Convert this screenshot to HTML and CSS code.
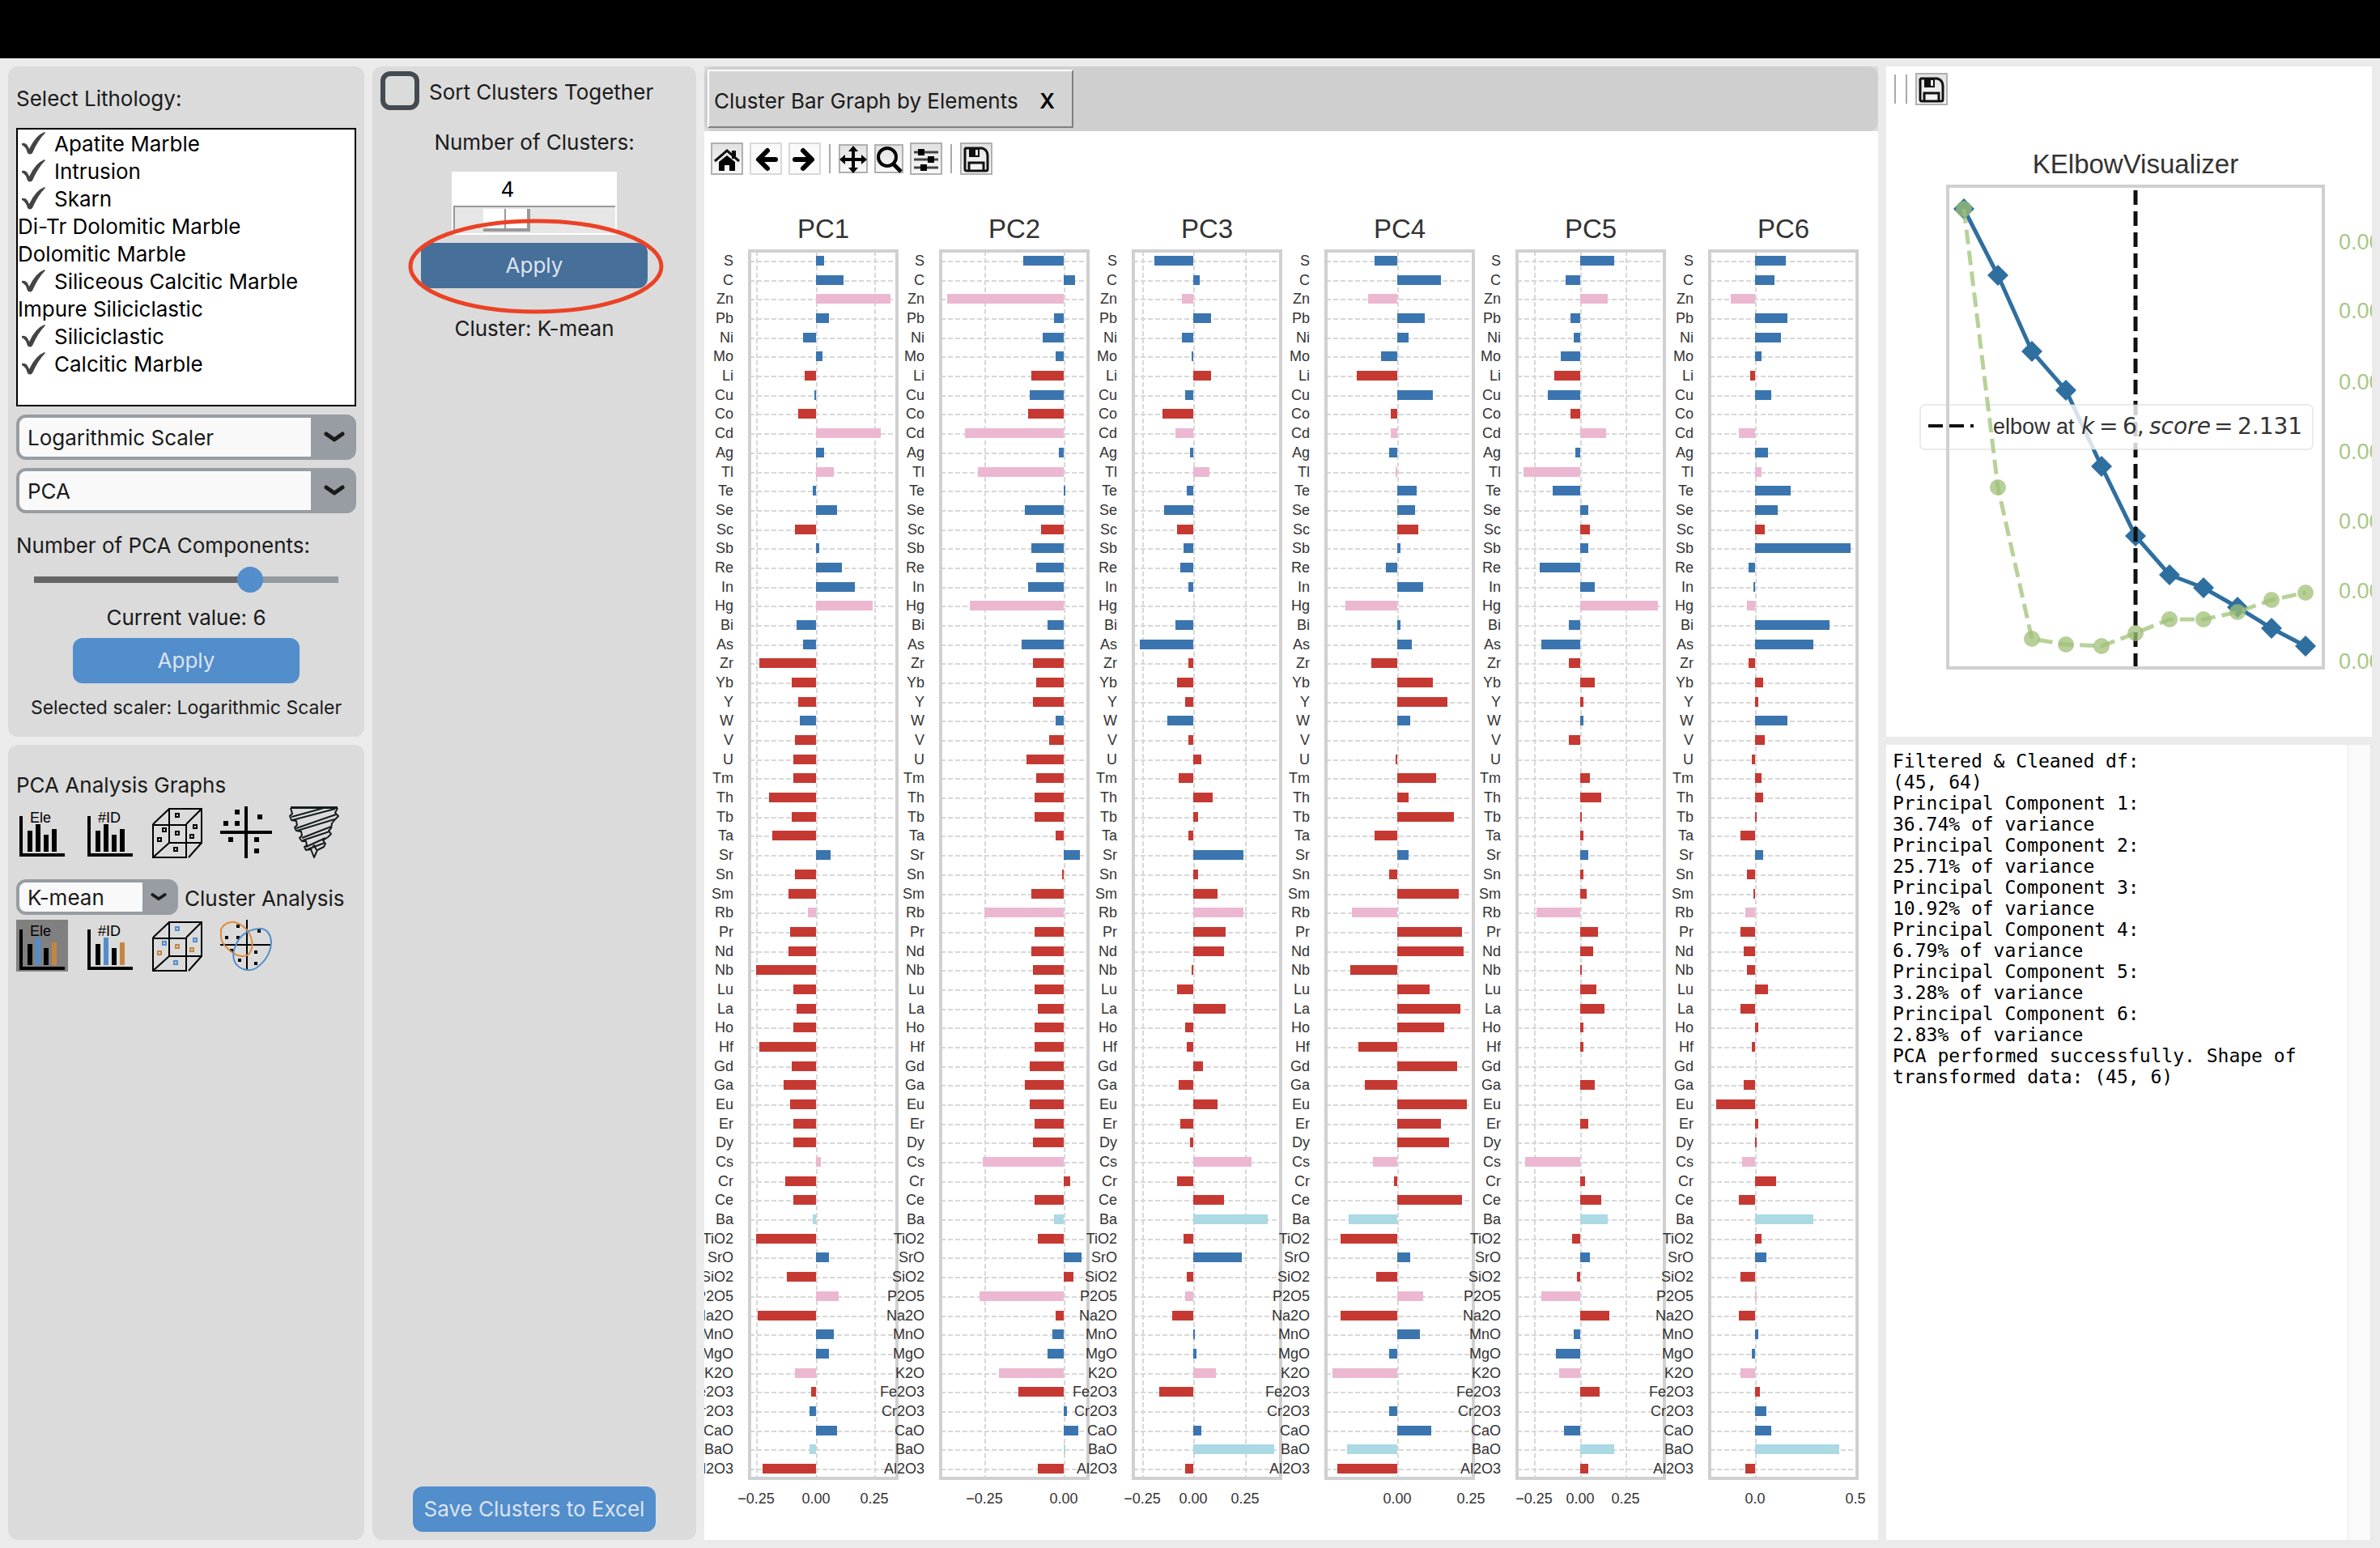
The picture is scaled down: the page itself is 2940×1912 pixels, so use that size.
FILE: index.html
```html
<!DOCTYPE html>
<html lang="en">
<head>
<meta charset="utf-8">
<title>Lithology Cluster Analysis</title>
<meta name="viewport" content="width=device-width, initial-scale=1">
<link rel="stylesheet" href="styles.css">
</head>
<body>
<svg class="defs" aria-hidden="true">
  <symbol id="i-bars" viewBox="0 0 64 64">
    <path d="M6 12V60H60" fill="none" stroke="#000" stroke-width="4"/>
    <path d="M17 56V30M37 56V35" stroke="#000" stroke-width="6"/>
    <path class="tone-a" d="M27 56V22" stroke-width="6"/>
    <path class="tone-b" d="M47 56V28" stroke-width="6"/>
  </symbol>
  <symbol id="i-cube" viewBox="0 0 64 64">
    <path d="M1 23H42V63H1ZM21 3H61V45H21ZM1 22 21 3M42 22 61 3M1 63 21 45M45 63 61 45" fill="none" stroke="#000" stroke-width="2"/>
    <path class="line-a" d="M29 9h4v4h-4zM13 27h4v4h-4zM51 23h4v4h-4zM27 51h4v4h-4z" fill="none" stroke-width="2"/>
    <path class="line-b" d="M29 31h4v4h-4zM7 39h4v4h-4zM47 35h4v4h-4z" fill="none" stroke-width="2"/>
  </symbol>
  <symbol id="i-save" viewBox="0 0 36 36">
    <path d="M5 5H25Q32 7 32 14V31Q32 33 30 33H6Q4 33 4 31V6Z" fill="none" stroke="#111" stroke-width="3"/>
    <path d="M9 5H22V16H9Z" fill="#111"/><path d="M17 7H20V14H17Z" fill="#eee"/>
    <path d="M9 33V23H27V33" fill="none" stroke="#111" stroke-width="3"/>
  </symbol>
</svg>

<div class="menubar"></div>
<main class="app">
  <div class="side">
    <section class="panel setup">
      <label class="caption first" for="lith">Select Lithology:</label>
      <select class="lithology" id="lith" multiple size="9">
        <option class="on">Apatite Marble</option>
        <option class="on">Intrusion</option>
        <option class="on">Skarn</option>
        <option>Di-Tr Dolomitic Marble</option>
        <option>Dolomitic Marble</option>
        <option class="on">Siliceous Calcitic Marble</option>
        <option>Impure Siliciclastic</option>
        <option class="on">Siliciclastic</option>
        <option class="on">Calcitic Marble</option>
      </select>
      <select class="combo" aria-label="Scaler"><option>Logarithmic Scaler</option></select>
      <select class="combo" aria-label="Method"><option>PCA</option></select>
      <label class="caption components" for="ncomp">Number of PCA Components:</label>
      <input class="slider" id="ncomp" type="range" min="0" max="100" value="73">
      <p class="caption current">Current value: 6</p>
      <button class="btn apply" type="button">Apply</button>
      <p class="caption selected">Selected scaler: Logarithmic Scaler</p>
    </section>
    <section class="panel graphs">
      <h2 class="caption">PCA Analysis Graphs</h2>
      <div class="icons">
        <button class="icon" type="button" aria-label="PCA by element"><svg viewBox="0 0 64 64"><use href="#i-bars"/><text x="17" y="20">Ele</text></svg></button>
        <button class="icon" type="button" aria-label="PCA by ID"><svg viewBox="0 0 64 64"><use href="#i-bars"/><text x="17" y="20">#ID</text></svg></button>
        <button class="icon" type="button" aria-label="PCA 3D"><svg viewBox="0 0 64 64"><use href="#i-cube"/></svg></button>
        <button class="icon" type="button" aria-label="PCA scatter"><svg viewBox="0 0 64 64"><path d="M32 0V64M0 32H64" stroke="#000" stroke-width="4"/><path d="M18 4h6v6h-6zM46 10h6v6h-6zM4 18h6v6h-6zM18 18h6v6h-6zM10 38h6v6h-6zM42 38h6v6h-6zM42 52h6v6h-6z"/></svg></button>
        <button class="icon" type="button" aria-label="Scree plot"><svg viewBox="0 0 64 64" fill="none" stroke="#141c1c" stroke-width="2" stroke-linejoin="round">
          <path d="M3 1H61" stroke-width="4"/>
          <path d="M3 2 5 9 2 12 4 17 10 18 11 23 8 26 10 30 16 31 17 36 14 39 17 43 22 43 23 48 20 50 22 54 28 53 32 63 36 54 44 50 46 46 43 42 49 38 53 34 50 30 53 27 54 21 58 16 62 12 58 8 61 2"/>
          <path d="M4 13 44 2M5 17 58 3M10 27 59 10M11 30 57 16M17 39 53 25M18 42 51 31M22 50 46 39M24 53 45 45M28 53 32 48 35 54"/></svg></button>
      </div>
      <div class="method">
        <select class="combo small" id="cluster"><option>K-mean</option></select>
        <label class="caption" for="cluster">Cluster Analysis</label>
      </div>
      <div class="icons colored">
        <button class="icon active" type="button" aria-label="Clusters by element"><svg viewBox="0 0 64 64"><use href="#i-bars"/><text x="17" y="20">Ele</text></svg></button>
        <button class="icon" type="button" aria-label="Clusters by ID"><svg viewBox="0 0 64 64"><use href="#i-bars"/><text x="17" y="20">#ID</text></svg></button>
        <button class="icon" type="button" aria-label="Clusters 3D"><svg viewBox="0 0 64 64"><use href="#i-cube"/></svg></button>
        <button class="icon" type="button" aria-label="Cluster scatter"><svg viewBox="0 0 64 64"><path d="M33 0V62M0 31H63" stroke="#000" stroke-width="2"/><path d="M20 6h4v4h-4zM46 12h4v4h-4zM6 20h4v4h-4zM20 20h4v4h-4zM12 36h4v4h-4zM22 48h4v4h-4zM42 38h4v4h-4zM42 52h4v4h-4z"/>
          <path d="M1 12C4 5 12 2 18 3 26 5 33 11 36 17 40 24 41 33 37 40 34 46 26 46 19 43 11 38 2 30 1 22Z" fill="none" stroke="#e08b3c" stroke-width="2"/>
          <path d="M48 11C57 10 63 18 63 29 62 42 54 53 44 60 35 65 24 61 19 54 14 46 16 38 20 30 24 20 34 12 48 11Z" fill="none" stroke="#528dcc" stroke-width="2"/></svg></button>
      </div>
    </section>
  </div>

  <section class="panel clusters">
    <label class="sort"><input type="checkbox"><span>Sort Clusters Together</span></label>
    <label class="caption count" for="ncl">Number of Clusters:</label>
    <div class="scale">
      <output for="ncl">4</output>
      <input id="ncl" type="range" min="2" max="10" value="4">
    </div>
    <div class="marked">
      <button class="btn pressed" type="button">Apply</button>
      <svg class="ring" viewBox="0 0 316 118" aria-hidden="true"><ellipse cx="158" cy="59" rx="155" ry="56"/></svg>
    </div>
    <p class="caption kind">Cluster: K-mean</p>
    <button class="btn save" type="button">Save Clusters to Excel</button>
  </section>

  <section class="figure">
    <div class="tabstrip"><div class="tabs">
      <div class="tab"><span>Cluster Bar Graph by Elements</span><button type="button">X</button></div>
    </div></div>
    <div class="tools">
      <button class="tool" type="button" aria-label="Home"><svg viewBox="0 0 36 36"><path d="M24 8h5v10h-5z"/><path d="M3 21 18 8 33 21" fill="none" stroke="#111" stroke-width="3"/><path d="M8 22 18 14 28 22V33H21V26H15V33H8Z"/></svg></button>
      <button class="tool dim" type="button" aria-label="Back"><svg viewBox="0 0 36 36"><path d="M20 8 9 19 20 30M10 19H30" fill="none" stroke="#000" stroke-width="6" stroke-linecap="round" stroke-linejoin="round"/></svg></button>
      <button class="tool dim" type="button" aria-label="Forward"><svg viewBox="0 0 36 36"><path d="M16 8 27 19 16 30M26 19H6" fill="none" stroke="#000" stroke-width="6" stroke-linecap="round" stroke-linejoin="round"/></svg></button>
      <span class="sep"></span>
      <button class="tool flat" type="button" aria-label="Pan"><svg viewBox="0 0 32 32"><path d="M16 4V29M3 17H29" stroke="#000" stroke-width="4"/><path d="M16 0 22 7H10ZM16 34 22 27H10ZM-1 17 6 11V23ZM33 17 26 11V23Z"/></svg></button>
      <button class="tool flat" type="button" aria-label="Zoom"><svg viewBox="0 0 32 32"><circle cx="14" cy="14" r="11" fill="none" stroke="#000" stroke-width="4"/><path d="M22 23 31 32" stroke="#000" stroke-width="5"/></svg></button>
      <button class="tool" type="button" aria-label="Configure subplots"><svg viewBox="0 0 36 36"><path d="M3 10H33M3 19H33M3 29H33" stroke="#444" stroke-width="3"/><path d="M8 6h8v8H8zM20 15h8v8h-8zM11 25h8v8h-8z"/></svg></button>
      <span class="sep"></span>
      <button class="tool" type="button" aria-label="Save figure"><svg><use href="#i-save"/></svg></button>
    </div>
    <svg class="chart" id="chart" viewBox="0 0 1450 1660" role="img" aria-label="Principal component loadings by element"></svg>
  </section>

  <div class="results">
    <section class="elbow">
      <div class="tools mini">
        <span class="sep"></span><span class="sep"></span>
        <button class="tool" type="button" aria-label="Save plot"><svg><use href="#i-save"/></svg></button>
      </div>
      <svg class="plot" viewBox="0 56 600 760" role="img" aria-label="KElbowVisualizer">
        <text class="title" x="308" y="132">KElbowVisualizer</text>
        <path d="M96 176 138 258 180 352 222 400 266 494 308 580 350 628 392 644 434 668 476 694 518 716" fill="none" stroke="#2f6f9f" stroke-width="5"/>
        <g fill="#2f6f9f" id="diamonds"></g>
        <path d="M308 743V148" stroke="#111" stroke-width="5" stroke-dasharray="18 8"/>
        <rect x="42" y="418" width="485" height="55" rx="6" fill="#fff" fill-opacity=".8" stroke="#ccc" stroke-opacity=".4" stroke-width="2"/>
        <path d="M52 444H108" stroke="#111" stroke-width="4" stroke-dasharray="18 8"/>
        <g class="legend"><text x="132" y="454">elbow at</text>
          <g class="math"><text class="it" x="241" y="454">k</text><text x="263" y="454">=</text><text x="292" y="454">6,</text><text class="it" x="325" y="454">score</text><text x="405" y="454">=</text><text x="434" y="454">2.131</text></g></g>
        <rect x="76" y="148" width="464" height="595" fill="none" stroke="#d0d0d0" stroke-width="4"/>
        <path d="M96 176 138 520 180 707 222 714 266 716 308 700 350 683 392 683 434 674 476 659 518 650" fill="none" stroke="#9fc377" stroke-opacity=".75" stroke-width="5" stroke-dasharray="18 8"/>
        <g fill="#9fbf75" fill-opacity=".75" id="dots"></g>
        <g class="ticks"><text x="559" y="226">0.006</text><text x="559" y="311">0.006</text><text x="559" y="399">0.006</text><text x="559" y="485">0.006</text><text x="559" y="571">0.006</text><text x="559" y="657">0.006</text><text x="559" y="744">0.006</text></g>
      </svg>
    </section>
    <section class="log">
      <textarea readonly aria-label="Output log">Filtered &amp; Cleaned df:
(45, 64)
Principal Component 1:
36.74% of variance
Principal Component 2:
25.71% of variance
Principal Component 3:
10.92% of variance
Principal Component 4:
6.79% of variance
Principal Component 5:
3.28% of variance
Principal Component 6:
2.83% of variance
PCA performed successfully. Shape of transformed data: (45, 6)</textarea>
      <div class="rail"></div>
    </section>
  </div>
</main>
<script src="chart.js"></script>
</body>
</html>
```
FILE: styles.css
```css
* { box-sizing: border-box; }
body {
  margin: 0;
  min-height: 100vh;
  display: flex;
  flex-direction: column;
  background: #ebebeb;
  color: #1a1a1a;
  font: 26px/32px Inter, "Liberation Sans", sans-serif;
}
button, select, input, textarea { font: inherit; color: inherit; margin: 0; }
button { border: 0; padding: 0; background: none; }
p, h2 { margin: 0; font: inherit; }
.defs { display: none; }
.menubar { height: 72px; background: #000; }
.app {
  flex: 1;
  display: grid;
  grid-template-columns: 440px 400px minmax(0, 1fr) 600px;
  gap: 10px;
  padding: 10px;
}
.side, .results { display: flex; flex-direction: column; gap: 10px; }
.panel {
  display: flex;
  flex-direction: column;
  padding: 0 10px;
  border-radius: 12px;
  background: #dbdbdb;
}

/* setup panel */
.setup { padding-bottom: 20px; }
.first { margin: 24px 0 20px; }
.lithology {
  height: 344px;
  padding: 2px 0 0;
  border: 2px solid #000;
  border-radius: 0;
  background: #fff;
  color: #000;
  overflow: hidden;
  outline: 0;
}
.lithology option { height: 34px; min-height: 34px; line-height: 34px; padding: 0; }
.lithology .on {
  padding-left: 45px;
  background: url("data:image/svg+xml,%3Csvg xmlns='http://www.w3.org/2000/svg' width='30' height='30'%3E%3Cpath d='M1 15Q7 13 10 22Q18 5 29 1L30 2Q21 11 14 27Q11 30 8 27Q6 19 1 17Z' fill='%23444'/%3E%3C/svg%3E") 4px 0 no-repeat;
}
.combo {
  appearance: none;
  height: 56px;
  margin-top: 10px;
  padding: 2px 60px 0 10px;
  border: 4px solid #979da2;
  border-radius: 12px;
  background:
    url("data:image/svg+xml,%3Csvg xmlns='http://www.w3.org/2000/svg' width='26' height='16'%3E%3Cpath d='M3 4L13 11L23 4' fill='none' stroke='%231a1a1a' stroke-width='5' stroke-linecap='round' stroke-linejoin='round'/%3E%3C/svg%3E") right 10px center no-repeat,
    linear-gradient(#979da2, #979da2) right / 52px 100% no-repeat,
    #f9f9f9;
}
.components { margin-top: 24px; }
.slider {
  appearance: none;
  height: 32px;
  margin: 10px 22px 0;
  background: linear-gradient(90deg, #666 72%, #939ba2 72%) center / 100% 8px no-repeat;
}
.slider::-webkit-slider-thumb {
  appearance: none;
  width: 32px;
  height: 32px;
  border-radius: 50%;
  background: #528dcc;
}
.current { margin-top: 15px; text-align: center; }
.btn {
  width: 280px;
  height: 56px;
  border-radius: 12px;
  background: #528dcc;
  color: #dce4ee;
}
.apply { align-self: center; margin-top: 9px; }
.selected { margin-top: 14px; text-align: center; font-size: 23px; white-space: nowrap; }

/* graph pickers */
.graphs { flex: 1; padding-top: 34px; }
.icons { display: flex; gap: 20px; margin-top: 10px; }
.icon { width: 64px; height: 64px; }
.icon svg { display: block; width: 64px; height: 64px; }
.icon text { font: 18px "Liberation Sans", sans-serif; fill: #000; }
.icons { --a: #000; --b: #000; }
.colored { --a: #528dcc; --b: #c68642; margin-top: 6px; }
.tone-a, .line-a { stroke: var(--a); }
.tone-b, .line-b { stroke: var(--b); }
.active { background: #808080; }
.method { display: flex; align-items: center; gap: 8px; margin-top: 26px; white-space: nowrap; }
.method .caption { padding-top: 4px; }
.small {
  width: 200px;
  height: 44px;
  margin: 0;
  padding-right: 40px;
  background-size: 20px 12px, 40px 100%, auto;
}

/* cluster panel */
.clusters { align-items: center; padding: 6px 10px 10px; }
.sort { align-self: stretch; display: flex; align-items: center; gap: 12px; }
.sort span { padding-top: 4px; }
.sort input {
  appearance: none;
  width: 48px;
  height: 48px;
  border: 6px solid #434a50;
  border-radius: 12px;
}
.count { margin-top: 24px; }
.scale { width: 204px; height: 78px; margin-top: 20px; padding: 0 2px; background: #fff; }
.scale output {
  display: block;
  width: 134px;
  height: 42px;
  padding-top: 6px;
  color: #000;
  text-align: center;
}
.scale input {
  appearance: none;
  display: block;
  width: 100%;
  height: 34px;
  border: solid #999;
  border-width: 2px 0 0 2px;
  background: #e6e6e6;
}
.scale input::-webkit-slider-thumb {
  appearance: none;
  width: 58px;
  height: 28px;
  border: solid #999;
  border-width: 0 4px 4px 0;
  background: linear-gradient(90deg, #fff 26px, #999 26px, #999 28px, #fff 28px);
}
.marked { position: relative; margin-top: 10px; }
.marked .btn { display: block; }
.pressed { background: #466f9a; }
.ring { position: absolute; left: -16px; top: -30px; width: 316px; height: 118px; pointer-events: none; }
.ring ellipse { fill: none; stroke: #eb4226; stroke-width: 5; }
.kind { margin-top: 34px; }
.save { width: 300px; margin-top: auto; }

/* bar chart column */
.figure { background: #fff; overflow: hidden; }
.tabstrip { background: #dbdbdb; }
.tabs { height: 80px; padding: 4px; border-radius: 12px; background: #cfcfcf; }
.tab {
  display: inline-flex;
  align-items: center;
  gap: 26px;
  height: 72px;
  padding: 6px 20px 0 6px;
  border: 2px solid;
  border-color: #fff #808080 #808080 #fff;
  background: #d4d4d4;
}
.tab button { width: 20px; color: #000; font-weight: 600; }
.tools { display: flex; align-items: center; gap: 8px; padding: 14px 8px; }
.tool { width: 40px; height: 40px; border: 2px solid #b0b0b0; background: linear-gradient(#e2e2e2, #f8f8f8); }
.tool svg { display: block; width: 100%; height: 100%; overflow: visible; }
.dim { border-color: #d8d8d8; background: #fafafa; }
.flat { width: 36px; height: 36px; }
.sep { width: 2px; height: 36px; margin: 0 2px; background: #aaa; }
.mini { gap: 8px; padding: 8px; }
.chart, .plot { display: block; width: 100%; height: auto; }
.chart text, .plot text { font-family: "Liberation Sans", sans-serif; fill: #333; }
.chart .name { font-size: 18px; text-anchor: end; }
.chart .tick { font-size: 18px; text-anchor: middle; }
.title { font-size: 33px; text-anchor: middle; }
.grid { fill: none; stroke: #d8d8d8; stroke-width: 2; stroke-dasharray: 6 3; }
.frame { fill: none; stroke: #d0d0d0; stroke-width: 4; }

/* results column */
.elbow { min-height: 828px; background: #fff; overflow: hidden; }
.plot .legend text { font-size: 27px; }
.plot .legend .math text { font-family: "DejaVu Sans", sans-serif; font-size: 28px; }
.plot .math .it { font-style: italic; }
.plot .ticks text { font-size: 27px; fill: #a9c888; }
.log { flex: 1; display: grid; grid-template-columns: minmax(0, 1fr) 30px; background: #fff; }
.log textarea {
  height: 100%;
  padding: 7px 6px 7px 8px;
  border: 0;
  outline: 0;
  resize: none;
  overflow: hidden;
  background: none;
  color: #000;
  font: 23px/26px "DejaVu Sans Mono", monospace;
}
.rail { border: solid #e8e8e8; border-width: 0 2px 0 1px; background: #fafafa; }
```
FILE: chart.js
```js
const COLORS = { b: '#3b75af', r: '#c53932', p: '#ecb8d1', l: '#abd9e4' };

// name, cluster colour, bar length in each of the six components
const ROWS = `S b 10 -50 -48 -28 42 38
C b 34 14 8 54 -18 24
Zn p 92 -144 -14 -36 34 -30
Pb b 16 -12 22 34 -12 40
Ni b -16 -26 -14 14 -8 32
Mo b 8 -10 -2 -20 -24 8
Li r -14 -40 22 -50 -32 -6
Cu b -2 -42 -10 44 -40 20
Co r -22 -44 -38 -8 -12 0
Cd p 80 -122 -22 -8 32 -20
Ag b 10 -6 -4 -10 -6 16
Tl p 22 -106 20 -2 -70 8
Te b -4 2 -8 24 -34 44
Se b 26 -48 -36 22 10 28
Sc r -26 -28 -20 26 12 12
Sb b 4 -40 -12 4 10 118
Re b 32 -34 -16 -14 -50 -8
In b 48 -44 -6 32 18 -2
Hg p 70 -116 0 -64 96 -10
Bi b -24 -20 -22 4 -14 92
As b -16 -52 -66 18 -48 72
Zr r -70 -38 -6 -32 -14 -8
Yb r -30 -34 -20 44 18 10
Y r -22 -38 -10 62 4 4
W b -20 -10 -32 16 4 40
V r -26 -18 -6 0 -14 12
U r -28 -46 10 -2 0 -4
Tm r -28 -34 -18 48 12 8
Th r -58 -36 24 14 26 10
Tb r -30 -36 6 70 2 2
Ta r -54 -10 -6 -28 4 -18
Sr b 18 20 62 14 10 10
Sn r -26 -2 6 -10 4 -10
Sm r -34 -40 30 76 8 -2
Rb p -10 -98 62 -56 -54 -12
Pr r -32 -36 40 80 22 -18
Nd r -34 -40 38 82 16 -14
Nb r -74 -38 -2 -58 2 -10
Lu r -28 -36 -20 40 20 16
La r -24 -32 40 78 30 -18
Ho r -28 -36 -10 58 4 4
Hf r -70 -36 -8 -48 4 -4
Gd r -30 -42 12 74 0 0
Ga r -40 -48 -18 -40 18 -14
Eu r -32 -42 30 86 0 -48
Er r -28 -36 -16 54 10 4
Dy r -28 -38 -4 64 0 2
Cs p 6 -100 72 -30 -68 -16
Cr r -38 8 -20 -4 6 26
Ce r -28 -36 38 80 26 -20
Ba l -4 -12 92 -60 34 72
TiO2 r -74 -32 -12 -70 -10 8
SrO b 16 22 60 16 12 14
SiO2 r -36 12 -8 -26 -4 -18
P2O5 p 28 -104 -10 32 -48 2
Na2O r -72 -10 -26 -70 36 -20
MnO b 22 -14 2 28 -8 4
MgO b 16 -20 4 -10 -30 -4
K2O p -26 -80 28 -80 -26 -18
Fe2O3 r -6 -56 -42 0 24 6
Cr2O3 b -8 4 0 -10 0 14
CaO b 26 18 10 42 -20 20
BaO l -8 2 100 -62 42 104
Al2O3 r -66 -32 -10 -74 10 -12`.split('\n').map(line => line.split(' '));

const PANELS = [
  { left: 56, zero: 138, ticks: [[64, '−0.25'], [138, '0.00'], [210, '0.25']] },
  { left: 292, zero: 444, ticks: [[346, '−0.25'], [444, '0.00']] },
  { left: 530, zero: 604, ticks: [[541, '−0.25'], [604, '0.00'], [668, '0.25']] },
  { left: 768, zero: 856, ticks: [[856, '0.00'], [947, '0.25']] },
  { left: 1004, zero: 1082, ticks: [[1025, '−0.25'], [1082, '0.00'], [1138, '0.25']] },
  { left: 1242, zero: 1298, ticks: [[1298, '0.0'], [1422, '0.5']] }
];
const WIDTH = 182, TOP = 80, BOTTOM = 1596, FIRST = 92, LAST = 1584;

let out = '';
PANELS.forEach((panel, i) => {
  const { left, zero, ticks } = panel;
  let grid = '', bars = '', names = '';
  ticks.forEach(([x]) => { if (x < left + WIDTH - 4) grid += `M${x + 1} ${TOP}V${BOTTOM}`; });
  ROWS.forEach((row, n) => {
    const y = Math.round(FIRST + n * (LAST - FIRST) / (ROWS.length - 1));
    const v = Number(row[2 + i]);
    grid += `M${left} ${y + 1}H${left + WIDTH}`;
    bars += `<rect x="${v < 0 ? zero + v : zero}" y="${y - 6}" width="${Math.abs(v)}" height="12" fill="${COLORS[row[1]]}"/>`;
    names += `<text class="name" x="${left - 20}" y="${y + 6}">${row[0]}</text>`;
  });
  out += `<path class="grid" d="${grid}"/>${bars}`
    + `<rect class="frame" x="${left}" y="${TOP}" width="${WIDTH}" height="${BOTTOM - TOP}"/>${names}`
    + `<text class="title" x="${left + WIDTH / 2}" y="64">PC${i + 1}</text>`
    + ticks.map(([x, t]) => `<text class="tick" x="${x}" y="1627">${t}</text>`).join('');
});
document.getElementById('chart').innerHTML = out;

const XS = [96, 138, 180, 222, 266, 308, 350, 392, 434, 476, 518];
const SCORE = [176, 258, 352, 400, 494, 580, 628, 644, 668, 694, 716];
const TIME = [176, 520, 707, 714, 716, 700, 683, 683, 674, 659, 650];
document.getElementById('diamonds').innerHTML =
  XS.map((x, i) => `<path d="M${x - 13} ${SCORE[i]}l13 -13 13 13 -13 13z"/>`).join('');
document.getElementById('dots').innerHTML =
  XS.map((x, i) => `<circle cx="${x}" cy="${TIME[i]}" r="10"/>`).join('');
```
